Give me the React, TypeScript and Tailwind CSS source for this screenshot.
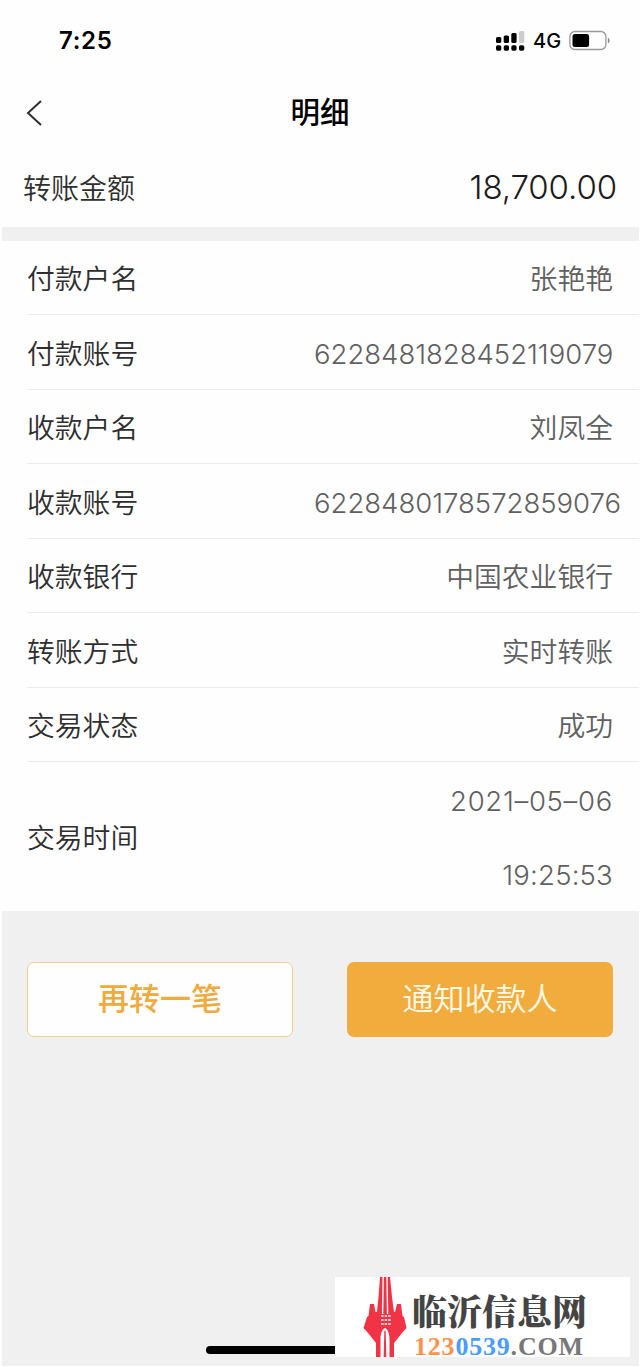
import { clsx } from "clsx"

const details = [
  { label: "付款户名", value: "张艳艳" },
  { label: "付款账号", value: "6228481828452119079", numeric: true },
  { label: "收款户名", value: "刘凤全" },
  { label: "收款账号", value: "6228480178572859076", numeric: true },
  { label: "收款银行", value: "中国农业银行" },
  { label: "转账方式", value: "实时转账" },
  { label: "交易状态", value: "成功" },
]

function StatusBar() {
  return (
    <div className="flex h-[81px] items-center justify-between pl-[59px] pr-[29px]">
      <span className="pt-px text-[24px] font-semibold tracking-[0.7px] text-black">7:25</span>
      <div className="flex items-center">
        {/* Dual SIM signal */}
        <svg className="h-[22px] w-[30px]" viewBox="0 0 30 22">
          <rect x="0" y="7" width="5.3" height="6" rx="1.5" />
          <rect x="7.7" y="5.5" width="5.3" height="7.5" rx="1.5" />
          <rect x="15.3" y="3" width="5.3" height="10" rx="1.5" />
          <rect x="23" y="1" width="5.3" height="12" rx="1.5" fill="#ccc" />
          <rect x="0" y="15.3" width="5.3" height="5.4" rx="1.6" />
          <rect x="7.7" y="15.3" width="5.3" height="5.4" rx="1.6" />
          <rect x="15.3" y="15.3" width="5.3" height="5.4" rx="1.6" />
          <rect x="23" y="15.3" width="5.3" height="5.4" rx="1.6" />
        </svg>
        <span className="ml-[7px] w-[28px] pt-px text-[20px] font-medium leading-[22px] text-black">4G</span>
        <svg className="ml-[7px] h-[22px] w-[43px]" viewBox="0 0 43 22">
          <rect x="1.9" y="1.5" width="36" height="18" rx="5" fill="none" stroke="#999" strokeWidth="1.3" />
          <rect x="4.5" y="4" width="16.6" height="13" rx="2.5" />
          <path d="M39.9 7.7C42.1 8.5 42.1 12.5 39.9 13.3Z" fill="#888" />
        </svg>
      </div>
    </div>
  )
}

function SiteBadge() {
  return (
    <div className="absolute left-[335px] top-[1277px] flex h-20 w-[295px] bg-white">
      <svg className="ml-[28px] h-20 w-[44px] shrink-0" viewBox="0 0 44 80">
        <path
          d="M17 0H27L29 20L31 35H32L34 27H38L39.5 39L41 40L43.5 51L39 56L31 66V80H13V66L5 56L.5 51L4 40L5.5 39L7 27H11L12.5 35H14L15.5 20Z"
          fill="#f03345"
        />
        <path d="M20.2 0L19.6 37M24 0L24.6 37" stroke="#fff" strokeWidth="1.4" />
        <path d="M18 39H28M18 43H28M18 47H28" stroke="#fff" strokeWidth="1.3" strokeDasharray="2.6 1" />
        <path d="M17.5 80V62C17.5 56 19.5 52 22 51C24.5 52 26.5 56 26.5 62V80H23.3L22.7 54H21.3L20.7 80Z" fill="#fff" />
      </svg>
      <div className="flex flex-col pl-[5px] pt-[14px]">
        <span className="font-['Noto_Serif_CJK_SC','Noto_Sans_CJK_SC',serif] text-[35px] font-black leading-[38px] text-[#444]">
          临沂信息网
        </span>
        <span className="mt-[6px] whitespace-nowrap pl-[2px] font-['Liberation_Serif',serif] text-[26px] font-bold leading-[24px] tracking-[0.8px] text-[#777]">
          <span className="text-[#ff914d]">123</span>
          <span className="text-[#4a9cff]">0539</span>.COM
        </span>
      </div>
    </div>
  )
}

export default function App() {
  return (
    <div className="relative h-[1367px] w-[640px] overflow-hidden bg-[#fefefe] font-['Inter','Noto_Sans_CJK_SC',sans-serif] text-[#2e2e2e]">
      <StatusBar />

      <header className="grid h-[64px] grid-cols-3 items-center px-[26px]">
        <svg className="h-[26px] w-[17px]" viewBox="0 0 17 26" fill="none" stroke="#2e2e2e" strokeWidth="2">
          <path d="M15 1L2 13L15 25" />
        </svg>
        <h1 className="pb-[3px] text-center text-[29.5px] font-medium leading-[40px] text-black">明细</h1>
      </header>

      <div className="flex h-[82px] items-center justify-between pl-[23px] pr-[23px] pt-[4px]">
        <span className="pt-px text-[28px] font-[350] leading-[40px]">转账金额</span>
        <span className="pb-[2px] text-[33px] font-[350] leading-[40px] tracking-[-0.1px] text-[#1c1c1c]">18,700.00</span>
      </div>

      <main className="ml-[2px] mr-px h-[1139px] bg-[#f0f0f0] pt-[13.5px]">
        <div className="bg-[#fefefe] pl-[25px]">
          {details.map(({ label, value, numeric }) => (
            <div key={label} className="flex h-[74.5px] items-center border-b border-[#ebebeb] pt-[4px]">
              <span className="w-[287px] shrink-0 text-[27.8px] font-[350] leading-[40px]">{label}</span>
              <span
                className={clsx(
                  "whitespace-nowrap font-[350] leading-[40px] text-[#606060]",
                  numeric ? "text-[27.5px]" : "flex-1 pr-[26px] text-right text-[27.8px]"
                )}
              >
                {value}
              </span>
            </div>
          ))}
          <div className="flex h-[149px] items-center justify-between pr-[26px]">
            <span className="pt-[4px] text-[27.8px] font-[350]">交易时间</span>
            <div className="pt-[3px] text-right text-[27.5px] font-[350] leading-[74.5px] tracking-[0.7px] text-[#606060]">
              <div>2021–05–06</div>
              <div className="tracking-[0.2px]">19:25:53</div>
            </div>
          </div>
        </div>

        <div className="flex justify-between pl-[25px] pr-[26px] pt-[51px]">
          <button className="h-[74.5px] w-[266px] rounded-[7px] border border-[#efd193] bg-[#fefefe] text-[31px] font-medium text-[#eeab3e]">
            再转一笔
          </button>
          <button className="h-[74.5px] w-[266px] rounded-[7px] bg-[#f2ac3d] text-[31px] font-[350] text-[#fffbe8]">
            通知收款人
          </button>
        </div>
      </main>

      {/* Home indicator */}
      <div className="absolute left-[206px] top-[1346px] h-[8px] w-[228px] rounded-full bg-black" />
      <SiteBadge />
    </div>
  )
}
